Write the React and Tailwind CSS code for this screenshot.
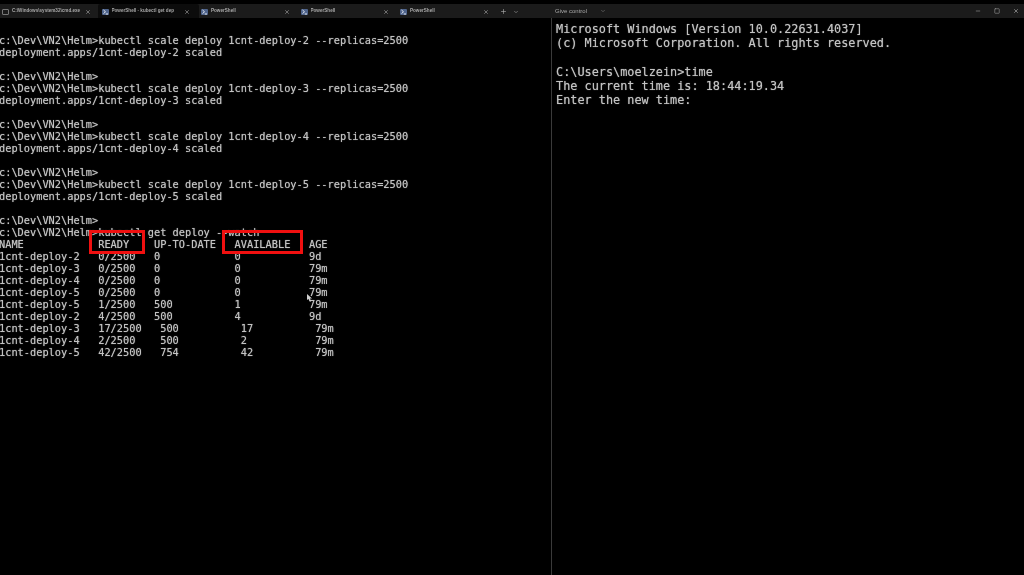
import { Minus, Square, X, Plus, ChevronDown } from "lucide-react";

const leftText = `c:\\Dev\\VN2\\Helm>kubectl scale deploy 1cnt-deploy-2 --replicas=2500
deployment.apps/1cnt-deploy-2 scaled

c:\\Dev\\VN2\\Helm>
c:\\Dev\\VN2\\Helm>kubectl scale deploy 1cnt-deploy-3 --replicas=2500
deployment.apps/1cnt-deploy-3 scaled

c:\\Dev\\VN2\\Helm>
c:\\Dev\\VN2\\Helm>kubectl scale deploy 1cnt-deploy-4 --replicas=2500
deployment.apps/1cnt-deploy-4 scaled

c:\\Dev\\VN2\\Helm>
c:\\Dev\\VN2\\Helm>kubectl scale deploy 1cnt-deploy-5 --replicas=2500
deployment.apps/1cnt-deploy-5 scaled

c:\\Dev\\VN2\\Helm>
c:\\Dev\\VN2\\Helm>kubectl get deploy --watch
NAME            READY    UP-TO-DATE   AVAILABLE   AGE
1cnt-deploy-2   0/2500   0            0           9d
1cnt-deploy-3   0/2500   0            0           79m
1cnt-deploy-4   0/2500   0            0           79m
1cnt-deploy-5   0/2500   0            0           79m
1cnt-deploy-5   1/2500   500          1           79m
1cnt-deploy-2   4/2500   500          4           9d
1cnt-deploy-3   17/2500   500          17          79m
1cnt-deploy-4   2/2500    500          2           79m
1cnt-deploy-5   42/2500   754          42          79m`;

const rightText = `Microsoft Windows [Version 10.0.22631.4037]
(c) Microsoft Corporation. All rights reserved.

C:\\Users\\moelzein>time
The current time is: 18:44:19.34
Enter the new time:`;

const tabs = [
  { title: "C:\\Windows\\system32\\cmd.exe", cmd: true },
  { title: "PowerShell - kubectl  get dep", active: true },
  { title: "PowerShell" },
  { title: "PowerShell" },
  { title: "PowerShell" },
];

function TabIcon({ cmd }) {
  if (cmd) {
    return <span className="h-[6px] w-[7px] shrink-0 rounded-[1px] border border-[#777]"></span>;
  }
  return (
    <svg className="shrink-0" width="7" height="6" viewBox="0 0 7 6">
      <rect width="7" height="6" rx="1" fill="#4f648c" />
      <path d="M1.5 1 L3.5 2.8 L1.5 4.6 M3.8 5 L6 5" stroke="#e4e8f0" strokeWidth="1" fill="none" />
    </svg>
  );
}

function Tab({ title, active, cmd }) {
  return (
    <div
      className={`flex h-full shrink-0 items-center pr-[9px] pt-[1px] ${
        active ? "-ml-[1.5px] w-[101px] rounded-t-[2px] bg-[#0c0c0c] pl-[3.5px]" : "w-[99.5px] pl-[2px]"
      }`}
    >
      <TabIcon cmd={cmd} />
      <span className="ml-[3px] flex-1 truncate text-[4.6px] font-bold text-[#a8a8a8]">{title}</span>
      <X size={6} strokeWidth={2.5} className="shrink-0 text-[#a0a0a0]" />
    </div>
  );
}

export default function App() {
  return (
    <div className="flex h-[575px] w-[1024px] flex-col overflow-hidden bg-black font-['DejaVu_Sans_Mono',monospace] text-[#c4c4c4]">
      <div className="mt-[4px] flex h-[14px] shrink-0 bg-[#1b1b1b] font-['Liberation_Sans',sans-serif] blur-[0.5px]">
        <div className="flex w-[552px] shrink-0 items-center">
          {tabs.map((t, i) => (
            <Tab key={i} {...t} />
          ))}
          <Plus size={7} strokeWidth={2} className="ml-[2px] mt-[1px] text-[#b5b5b5]" />
          <ChevronDown size={6} strokeWidth={2} className="ml-[6px] mt-[1px] text-[#b5b5b5]" />
        </div>
        <div className="flex flex-1 items-center pl-[3px] pr-[5px]">
          <span className="text-[6px] text-[#a8a8a8]">Give control</span>
          <ChevronDown size={6} strokeWidth={2} className="ml-[13px] text-[#888]" />
          <div className="ml-auto flex items-center gap-[13px] text-[#b0b0b0]">
            <Minus size={6} strokeWidth={2} />
            <Square size={6} strokeWidth={2} />
            <X size={6} strokeWidth={2.5} />
          </div>
        </div>
      </div>
      <div className="flex min-h-0 flex-1">
        <div className="relative w-[551px] shrink-0 overflow-hidden">
          <pre className="-ml-[1px] mt-[16px] font-['DejaVu_Sans_Mono',monospace] text-[10.3px] leading-[12px] blur-[0.5px] [text-shadow:0_0_1px_#8a8a8a]">{leftText}</pre>
          <div className="absolute left-[89px] top-[212px] h-[24px] w-[56px] border-[3px] border-[#f01010]"></div>
          <div className="absolute left-[222px] top-[212px] h-[24px] w-[81px] border-[3px] border-[#f01010]"></div>
          <svg className="absolute left-[307px] top-[276px]" width="5" height="8" viewBox="0 0 5 8">
            <path d="M0 0 L0 6 L1.5 5 L3 8 L4 7 L3 4.5 L5 4.5 Z" fill="#d0d0d0" />
          </svg>
        </div>
        <div className="w-px shrink-0 bg-[#3a3a3a]"></div>
        <pre className="ml-[4px] mt-[4px] font-['DejaVu_Sans_Mono',monospace] text-[11.85px] leading-[14.2px] blur-[0.5px] [text-shadow:0_0_1px_#8a8a8a]">{rightText}</pre>
      </div>
    </div>
  );
}
